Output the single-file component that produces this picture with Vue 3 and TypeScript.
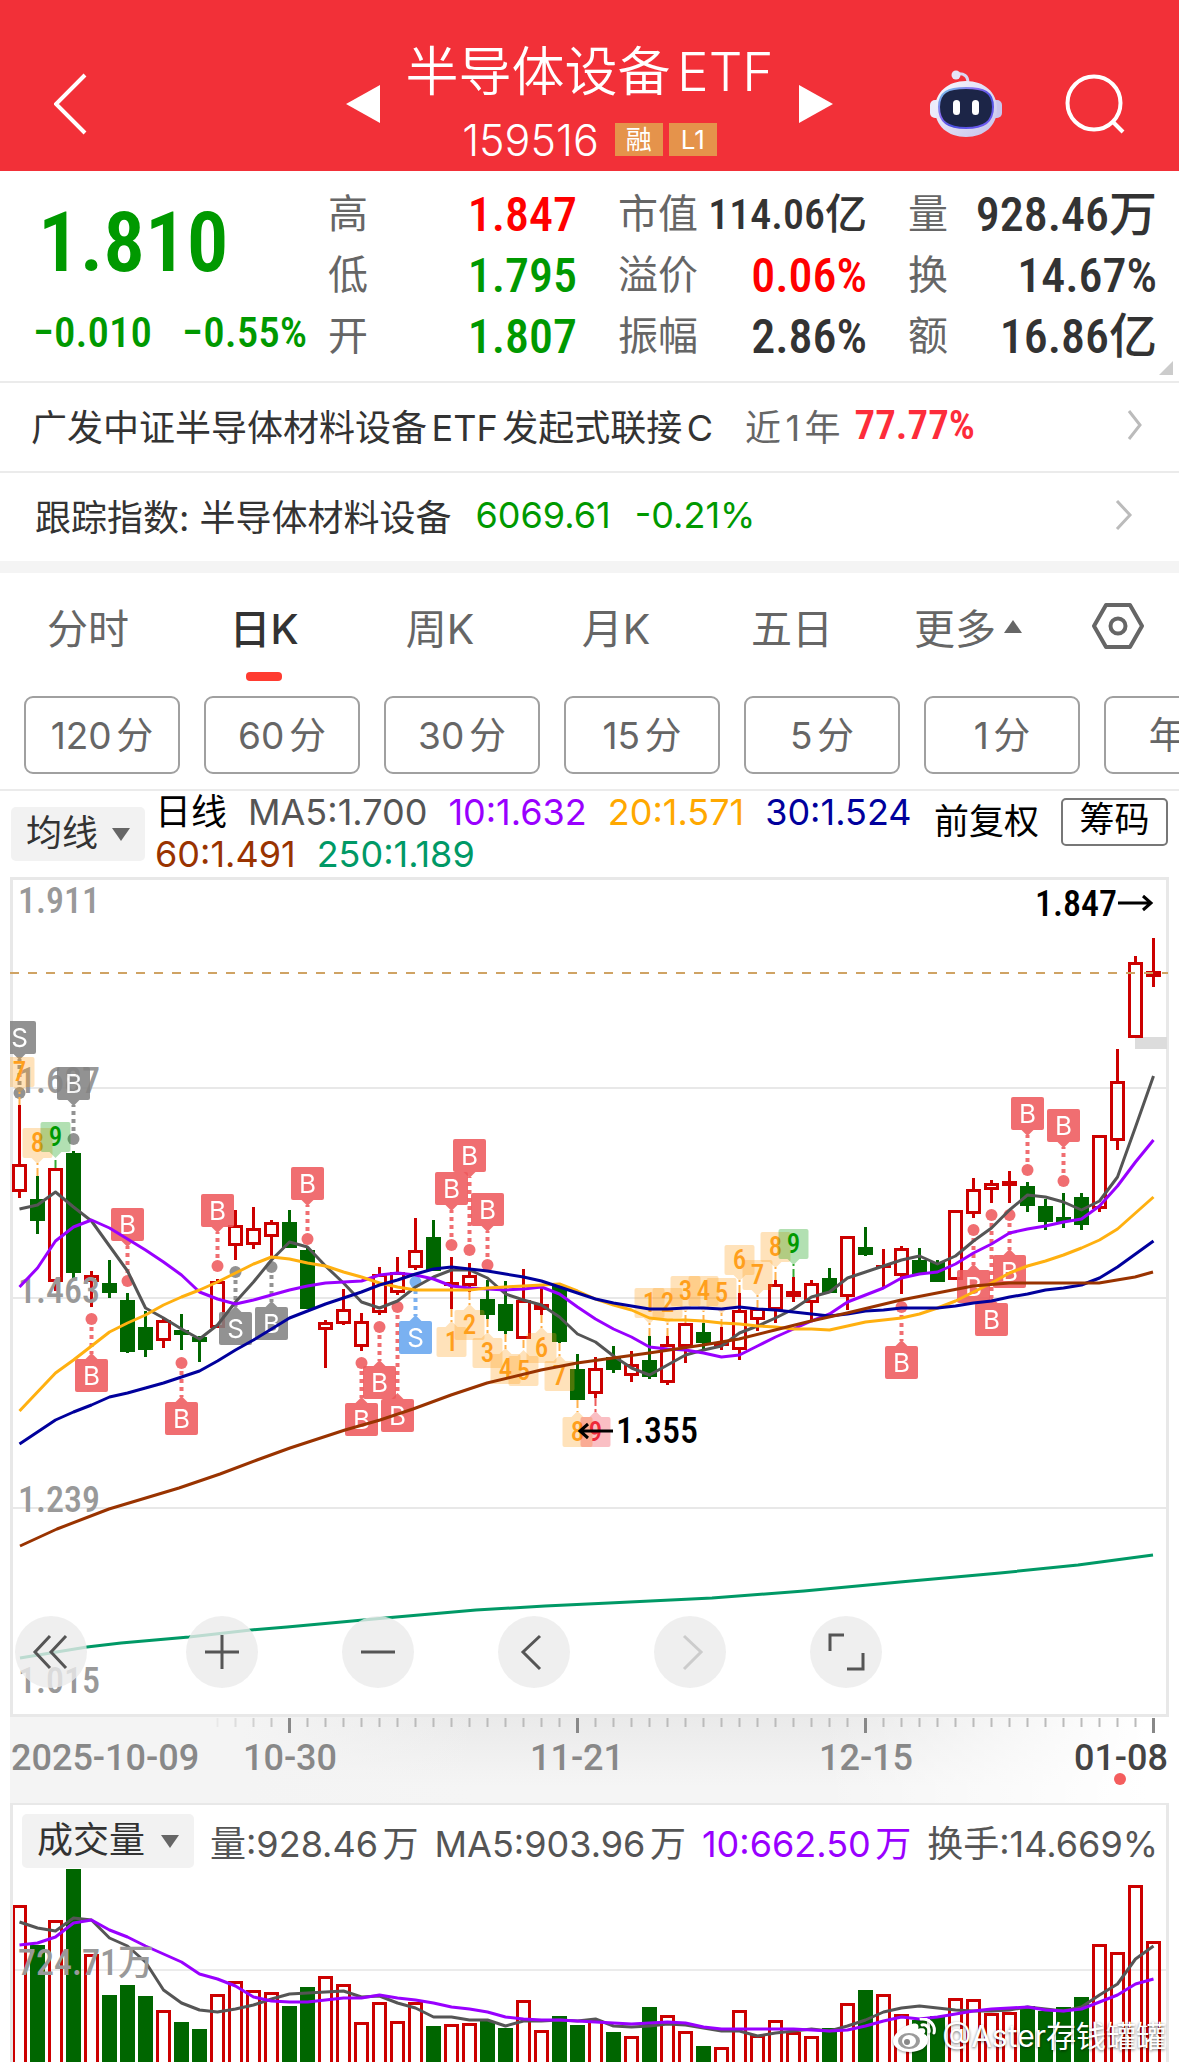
<script setup lang="ts">
import { ref } from 'vue'

type Side = 'up' | 'down'
interface Candle { x: number; up: boolean; high: number; top: number; bottom: number; low: number }
interface Signal { x: number; label: string; kind: string; box: number; dot: number; side: Side }
interface Count { x: number; label: string; kind: string; box: number; anchor: number; side: Side }

const STEP = 18
const FIRST = 19
const BODY = 15
const xAt = (i: number): number => FIRST + i * STEP + 0.5

/* r = rising, g = falling; high, body top, body bottom, low */
const rawCandles = `r 1105 1164 1192 1198|g 1176 1199 1221 1234|r 1168 1168 1282 1291|g 1151 1153 1273 1281|r 1271 1275 1282 1307|g 1260 1283 1293 1298|g 1293 1300 1352 1353|g 1311 1327 1350 1357|r 1318 1320 1341 1348|g 1314 1330 1335 1350|g 1336 1337 1342 1362|r 1279 1281 1328 1328|r 1210 1225 1246 1260|r 1207 1228 1245 1249|r 1220 1222 1237 1257|g 1210 1222 1248 1248|g 1248 1250 1309 1309|r 1320 1322 1330 1368|r 1289 1309 1324 1325|r 1313 1321 1347 1351|r 1267 1274 1313 1315|r 1257 1272 1293 1295|r 1218 1250 1268 1270|g 1220 1237 1271 1271|r 1257 1282 1286 1309|r 1263 1275 1286 1292|g 1280 1299 1315 1319|g 1281 1304 1331 1334|r 1269 1300 1339 1339|r 1286 1304 1310 1315|g 1285 1286 1342 1343|g 1354 1369 1400 1400|r 1357 1368 1394 1398|g 1346 1357 1370 1373|r 1351 1364 1376 1382|g 1336 1360 1377 1379|r 1336 1344 1383 1385|r 1323 1323 1347 1363|g 1323 1332 1343 1351|r 1327 1342 1346 1350|r 1293 1310 1350 1360|r 1308 1308 1320 1331|r 1280 1284 1310 1323|r 1277 1291 1297 1302|r 1280 1283 1303 1320|g 1268 1278 1293 1293|r 1236 1236 1297 1310|g 1227 1247 1255 1256|r 1249 1265 1268 1287|r 1246 1248 1276 1294|g 1248 1260 1274 1274|g 1260 1262 1282 1282|r 1210 1210 1280 1280|r 1178 1189 1214 1218|r 1180 1183 1190 1203|r 1171 1181 1186 1203|g 1182 1186 1206 1212|g 1199 1206 1222 1230|g 1193 1217 1222 1228|g 1193 1197 1225 1230|r 1135 1135 1209 1212|r 1049 1081 1141 1150|r 956 962 1038 1038|r 938 971 977 987`
const candles: Candle[] = rawCandles.split('|').map((row, i) => {
  const [k, ...v] = row.split(' ')
  const [high, top, bottom, low] = v.map(Number)
  return { x: xAt(i), up: k === 'r', high, top, bottom, low }
})

const line = (s: string): string => s.split(' ').map((y, i) => `${xAt(i)},${y}`).join(' ')

const averages = [
  { color: '#555555', points: line('1209 1205 1192 1207 1221 1246 1271 1308 1318 1329 1339 1325 1302 1282 1260 1242 1247 1266 1283 1302 1308 1301 1287 1277 1270 1270 1278 1294 1300 1305 1317 1334 1342 1356 1368 1375 1365 1355 1350 1346 1333 1326 1318 1309 1297 1292 1278 1272 1266 1260 1256 1264 1256 1241 1228 1210 1195 1197 1202 1210 1201 1177 1127 1076') },
  { color: '#9900ff', points: line('1287 1268 1241 1227 1220 1228 1239 1250 1262 1275 1292 1299 1304 1300 1295 1290 1286 1283 1282 1281 1275 1273 1275 1279 1286 1288 1289 1290 1289 1287 1294 1307 1319 1329 1337 1347 1349 1350 1353 1357 1355 1346 1337 1329 1321 1314 1302 1295 1288 1278 1274 1272 1264 1253 1244 1233 1229 1226 1222 1219 1206 1186 1162 1140') },
  { color: '#ffb010', points: line('1411 1392 1373 1360 1346 1332 1323 1315 1305 1297 1290 1282 1273 1264 1257 1259 1263 1266 1272 1277 1283 1287 1290 1290 1290 1290 1288 1287 1286 1285 1284 1291 1299 1305 1310 1318 1320 1320 1321 1323 1324 1326 1327 1329 1329 1330 1326 1322 1320 1318 1314 1308 1301 1292 1283 1273 1266 1261 1255 1248 1240 1229 1213 1197') },
  { color: '#00009c', points: line('1444 1432 1420 1412 1405 1397 1393 1388 1383 1377 1371 1361 1350 1340 1329 1318 1311 1304 1298 1292 1285 1280 1274 1269 1267 1269 1271 1274 1277 1281 1287 1293 1299 1303 1306 1309 1309 1308 1308 1309 1307 1309 1310 1312 1314 1316 1314 1311 1310 1308 1308 1308 1306 1303 1301 1297 1294 1290 1288 1285 1278 1267 1254 1241') },
  { color: '#993300', points: '20,1546 57,1529 109,1509 179,1488 220,1474 257,1460 290,1448 345,1430 380,1420 413,1409 451,1395 487,1383 541,1370 577,1363 613,1358 649,1353 703,1345 739,1339 775,1330 811,1321 847,1313 901,1300 937,1293 973,1286 1009,1283 1045,1283 1099,1283 1117,1280 1135,1277 1153,1272' },
  { color: '#009966', points: '20,1658 87,1647 121,1643 155,1640 189,1637 251,1630 287,1627 385,1618 476,1610 545,1606 609,1603 712,1598 804,1591 900,1582 1000,1573 1078,1565 1153,1555' },
]

const rawSignals = `0 S gray 1021 1093|3 B gray 1067 1139|4 B red 1359 1319|6 B red 1208 1281|9 B red 1402 1363|11 B red 1194 1266|12 S gray 1312 1272|14 B gray 1307 1267|16 B red 1167 1239|19 B red 1403 1363|20 B red 1366 1327|21 B red 1399 1307|22 S blue 1321 1282|24 B red 1172 1245|25 B red 1139 1250|26 B red 1193 1265|49 B red 1346 1307|53 B red 1270 1230|54 B red 1303 1215|55 B red 1255 1215|56 B red 1097 1170|58 B red 1109 1181`
const signals: Signal[] = rawSignals.split('|').map((row) => {
  const [i, label, kind, box, dot] = row.split(' ')
  return { x: xAt(+i), label, kind, box: +box, dot: +dot, side: +box < +dot ? 'up' : 'down' }
})

const rawCounts = `0 7 orange 1057 1105|1 8 orange 1128 1176|2 9 green 1122 1168|24 1 orange 1327 1309|25 2 orange 1310 1292|26 3 orange 1338 1319|27 4 orange 1354 1334|28 5 orange 1356 1340|29 6 orange 1333 1315|30 7 orange 1361 1343|31 8 orange 1417 1400|32 9 red 1417 1398|35 1 orange 1288 1336|36 2 orange 1288 1336|37 3 orange 1276 1323|38 4 orange 1276 1323|39 5 orange 1278 1327|40 6 orange 1245 1293|41 7 orange 1260 1308|42 8 orange 1232 1280|43 9 green 1229 1277`
const counts: Count[] = rawCounts.split('|').map((row) => {
  const [i, label, kind, box, anchor] = row.split(' ')
  return { x: xAt(+i), label, kind, box: +box, anchor: +anchor, side: +box < +anchor ? 'up' : 'down' }
})

/* triangle joining a tag to its leader line */
const tip = (x: number, box: number, size: number, side: Side): string =>
  side === 'up'
    ? `${x - 6},${box + size} ${x + 6},${box + size} ${x},${box + size + 6}`
    : `${x - 6},${box} ${x + 6},${box} ${x},${box - 6}`

const volumes = '1905 1945 1920 1869 1954 1995 1985 1996 2010 2022 2029 1994 1981 1990 1992 2006 1987 1976 1984 2022 2002 2021 2002 2026 2024 2023 2021 2028 2000 2030 2016 2025 2020 2032 2036 2007 2015 2031 2046 2047 2010 2035 2020 2032 2036 2028 2003 1990 1994 2014 2020 2016 1998 1999 2013 2012 2006 2011 2007 1997 1944 1952 1885 1941'.split(' ').map(Number)
const volumeAverages = [
  { color: '#555555', points: line('1922 1928 1931 1918 1920 1938 1946 1962 1990 2003 2010 2012 2009 2005 1999 1994 1993 1992 1991 1997 1996 2003 2008 2017 2017 2020 2020 2026 2021 2021 2020 2021 2019 2026 2027 2026 2024 2025 2028 2031 2031 2036 2033 2031 2029 2031 2026 2020 2012 2008 2006 2008 2010 2011 2011 2010 2007 2009 2011 2007 1995 1984 1959 1946') },
  { color: '#9900ff', points: line('1945 1943 1937 1923 1920 1930 1937 1946 1954 1962 1974 1979 1986 1997 2001 2002 2002 2000 1998 1998 1995 1998 2000 2003 2007 2009 2012 2017 2019 2020 2020 2021 2022 2023 2024 2023 2022 2023 2027 2029 2029 2029 2029 2029 2030 2031 2030 2026 2021 2017 2019 2017 2014 2011 2009 2008 2007 2010 2011 2009 2002 1995 1984 1979') },
]

const gridLines = [1088, 1298, 1508]
const yLabels = [
  { t: '1.911', y: 913 }, { t: '1.687', y: 1093 }, { t: '1.463', y: 1303 },
  { t: '1.239', y: 1512 }, { t: '1.015', y: 1693 },
]
const ticks = Array.from({ length: 53 }, (_, k) => k + 11)
const isMajor = (i: number): boolean => i % 16 === 15
const dates = [
  { t: '2025-10-09', x: 11, a: 'start', c: 'date' }, { t: '10-30', x: 290, a: 'middle', c: 'date' },
  { t: '11-21', x: 577, a: 'middle', c: 'date' }, { t: '12-15', x: 866, a: 'middle', c: 'date' },
  { t: '01-08', x: 1168, a: 'end', c: 'date date-now' },
]

const quote = [
  [{ k: '高', v: '1.847', c: 'rise' }, { k: '低', v: '1.795', c: 'fall' }, { k: '开', v: '1.807', c: 'fall' }],
  [{ k: '市值', v: '114.06亿', c: 'small' }, { k: '溢价', v: '0.06%', c: 'rise' }, { k: '振幅', v: '2.86%', c: '' }],
  [{ k: '量', v: '928.46万', c: '' }, { k: '换', v: '14.67%', c: '' }, { k: '额', v: '16.86亿', c: '' }],
]

const tabs = ['分时', '日K', '周K', '月K', '五日', '更多']
const activeTab = ref('日K')
const periods = ['120分', '60分', '30分', '15分', '5分', '1分', '年K']
const mainIndicator = ref('均线')
const subIndicator = ref('成交量')
const legend = [
  { t: '日线', c: '#000000' }, { t: 'MA5:1.700', c: '#555555' }, { t: '10:1.632', c: '#9900ff' },
  { t: '20:1.571', c: '#ffa800' }, { t: '30:1.524', c: '#00009c' },
  { t: '60:1.491', c: '#993300' }, { t: '250:1.189', c: '#009966' },
]
</script>

<template>
  <main class="page">
    <header class="topbar">
      <button class="icon-btn back" aria-label="返回">
        <svg width="34" height="62" viewBox="0 0 34 62"><path d="M31 2 2 31 31 60" fill="none" stroke="#fff" stroke-width="4" /></svg>
      </button>
      <div class="switcher">
        <button class="icon-btn" aria-label="上一个">
          <svg width="34" height="38" viewBox="0 0 34 38"><path d="M34 0V38L0 19Z" fill="#fff" /></svg>
        </button>
        <div class="name">
          <h1>半导体设备ETF</h1>
          <p class="code"><span>159516</span><em>融</em><em>L1</em></p>
        </div>
        <button class="icon-btn" aria-label="下一个">
          <svg width="34" height="38" viewBox="0 0 34 38"><path d="M0 0V38L34 19Z" fill="#fff" /></svg>
        </button>
      </div>
      <div class="actions">
        <button class="icon-btn" aria-label="助手">
          <svg width="72" height="68" viewBox="0 0 72 68">
            <defs>
              <linearGradient id="shell" x1="0" y1="0" x2="1" y2="1"><stop offset="0" stop-color="#fafaff" /><stop offset="1" stop-color="#c4c0ea" /></linearGradient>
              <linearGradient id="rim" x1="0" y1="0" x2="1" y2="1"><stop offset="0" stop-color="#6fd0e8" /><stop offset=".35" stop-color="#8a6cf0" /><stop offset=".6" stop-color="#4a50e0" /><stop offset="1" stop-color="#7a5cf5" /></linearGradient>
            </defs>
            <path d="M27 4c7-1 11 2 11 9" fill="none" stroke="#d9d6f2" stroke-width="3" />
            <circle cx="26" cy="5" r="4.500" fill="#e6e4f8" />
            <rect x="0" y="30" width="12" height="18" rx="5" fill="#ecebfa" />
            <rect x="60" y="30" width="12" height="18" rx="5" fill="#c9c5ee" />
            <path d="M36 11C54 11 67 22 67 39S54 67 36 67 5 56 5 39 18 11 36 11Z" fill="url(#shell)" />
            <path d="M36 18C54 18 63 22 63 37S54 58 36 58 9 52 9 37 18 18 36 18Z" fill="#1c2547" stroke="url(#rim)" stroke-width="2" />
            <rect x="23" y="30" width="7" height="15" rx="3.500" fill="#fff" />
            <rect x="42" y="30" width="7" height="15" rx="3.500" fill="#fff" />
          </svg>
        </button>
        <button class="icon-btn" aria-label="搜索">
          <svg width="60" height="60" viewBox="0 0 60 60"><circle cx="29" cy="29" r="26.500" fill="none" stroke="#fff" stroke-width="4" /><path d="M47 47 58 58" stroke="#fff" stroke-width="4" /></svg>
        </button>
      </div>
    </header>

    <section class="quote">
      <div class="last">
        <strong>1.810</strong>
        <p><span>−0.010</span><span>−0.55%</span></p>
      </div>
      <dl v-for="(col, c) in quote" :key="c">
        <div v-for="item in col" :key="item.k"><dt>{{ item.k }}</dt><dd :class="item.c">{{ item.v }}</dd></div>
      </dl>
      <i class="corner"></i>
    </section>

    <a class="link-row" href="#fund">
      <span class="dark">广发中证半导体材料设备ETF发起式联接C</span>
      <span class="year">近1年</span><b>77.77%</b>
      <svg width="15" height="30" viewBox="0 0 15 30"><path d="M2 1 13 15 2 29" fill="none" stroke="#bbb" stroke-width="3" /></svg>
    </a>
    <a class="link-row index-row" href="#index">
      <span class="dark">跟踪指数: 半导体材料设备</span>
      <span class="pt">6069.61</span><span class="pct">-0.21%</span>
      <svg width="18" height="30" viewBox="0 0 18 30"><path d="M2 1 15 15 2 29" fill="none" stroke="#bbb" stroke-width="3" /></svg>
    </a>

    <nav class="tabs">
      <button v-for="t in tabs" :key="t" :class="{ on: t === activeTab }" @click="activeTab = t">
        {{ t }}<svg v-if="t === '更多'" width="18" height="13" viewBox="0 0 18 13"><path d="M9 0 18 13H0Z" fill="#666" /></svg>
      </button>
      <button aria-label="设置">
        <svg width="52" height="46" viewBox="0 0 52 46"><path d="M14 2H38L50 23 38 44H14L2 23Z" fill="none" stroke="#666" stroke-width="4" stroke-linejoin="round" /><circle cx="26" cy="23" r="7.500" fill="none" stroke="#666" stroke-width="4" /></svg>
      </button>
    </nav>

    <div class="periods"><button v-for="p in periods" :key="p">{{ p }}</button></div>

    <section class="legend">
      <label class="picker main-picker"><select v-model="mainIndicator" aria-label="主图指标"><option>均线</option></select></label>
      <ul><li v-for="l in legend" :key="l.t" :style="{ color: l.c }">{{ l.t }}</li></ul>
      <div class="adjust"><button class="plain">前复权</button><button class="chips">筹码</button></div>
    </section>

    <section class="price-chart">
      <svg class="plot" viewBox="10 877 1159 840">
        <g fill="none" stroke="#e8e8e8">
          <rect x="11.500" y="878.500" width="1156" height="837" stroke-width="3" />
          <path v-for="y in gridLines" :key="y" :d="`M13 ${y}H1166`" stroke-width="2" />
        </g>
        <rect x="1135" y="1037" width="32" height="12" fill="#dcdcdc" />
        <g v-for="(c, i) in candles" :key="i" :class="c.up ? 'up' : 'dn'">
          <path :d="`M${c.x} ${c.high}V${c.top}M${c.x} ${c.bottom}V${c.low}`" stroke-width="3" />
          <rect v-if="c.up && c.bottom - c.top > 6" :x="c.x - 6" :y="c.top + 1.5" :width="BODY - 3" :height="Math.max(c.bottom - c.top - 3, 2)" stroke-width="3" fill="none" />
          <rect v-else class="solid" :x="c.x - 7.5" :y="c.top" :width="BODY" :height="c.bottom - c.top" />
        </g>
        <path d="M10 973H1168" stroke="#cfa364" stroke-width="2" stroke-dasharray="9 9" />
        <text v-for="l in yLabels" :key="l.t" class="scale" x="18" :y="l.y">{{ l.t }}</text>
        <g v-for="s in signals" :key="'s' + s.x" :class="['tag', s.kind]">
          <path :d="`M${s.x} ${s.dot}V${s.side === 'up' ? s.box + 38 : s.box - 5}`" stroke-width="4" stroke-dasharray="4 4" />
          <circle :cx="s.x" :cy="s.dot" r="6" />
          <rect :x="s.x - 16.5" :y="s.box" width="33" height="33" rx="2" />
          <polygon :points="tip(s.x, s.box, 33, s.side)" />
          <text :x="s.x" :y="s.box + 26" text-anchor="middle">{{ s.label }}</text>
        </g>
        <g v-for="n in counts" :key="'n' + n.x" :class="['count', n.kind]">
          <path :d="`M${n.x} ${n.anchor}V${n.side === 'up' ? n.box + 35 : n.box - 5}`" stroke-width="2" stroke-dasharray="8 3" />
          <rect :x="n.x - 15" :y="n.box" width="30" height="30" rx="2" />
          <polygon :points="tip(n.x, n.box, 30, n.side)" />
          <text :x="n.x" :y="n.box + 24" text-anchor="middle">{{ n.label }}</text>
        </g>
        <polyline v-for="a in averages" :key="a.color" :points="a.points" fill="none" :stroke="a.color" stroke-width="3" stroke-linejoin="round" />
        <g fill="none" stroke="#000" stroke-width="3">
          <path d="M613 1431H580M588 1424 580 1431 588 1438" />
          <path d="M1118 903H1151M1143 896 1151 903 1143 910" />
        </g>
        <text class="extreme" x="616" y="1443">1.355</text>
        <text class="extreme" x="1117" y="916" text-anchor="end">1.847</text>
      </svg>
      <div class="tools">
        <button aria-label="最早"><svg viewBox="0 0 72 72"><path d="M35 20 20 36 35 52M51 20 36 36 51 52" /></svg></button>
        <button aria-label="放大"><svg viewBox="0 0 72 72"><path d="M19 36H53M36 19V53" /></svg></button>
        <button aria-label="缩小"><svg viewBox="0 0 72 72"><path d="M19 36H53" /></svg></button>
        <button aria-label="向左"><svg viewBox="0 0 72 72"><path d="M42 20 25 36 42 53" /></svg></button>
        <button aria-label="向右" disabled><svg viewBox="0 0 72 72"><path d="M30 20 47 36 30 53" /></svg></button>
        <button aria-label="全屏"><svg viewBox="0 0 72 72"><path d="M20 35V19H34M37 53H53V37" /></svg></button>
      </div>
    </section>

    <section class="axis">
      <svg class="plot" viewBox="10 1717 1159 86">
        <path v-for="i in ticks" :key="i" :d="`M${xAt(i)} 1718V${isMajor(i) ? 1733 : 1727}`" :stroke="isMajor(i) ? '#888' : '#bbb'" :stroke-width="isMajor(i) ? 3 : 2" :opacity="Math.min(1, (i - 10) / 5)" />
        <text v-for="d in dates" :key="d.t" :class="d.c" :x="d.x" y="1770" :text-anchor="d.a">{{ d.t }}</text>
        <circle cx="1120" cy="1779" r="6" fill="#f45d5d" />
      </svg>
    </section>

    <section class="volume">
      <div class="volume-head">
        <label class="picker"><select v-model="subIndicator" aria-label="副图指标"><option>成交量</option></select></label>
        <span>量:928.46万</span><span>MA5:903.96万</span><span class="purple">10:662.50万</span><span>换手:14.669%</span>
      </div>
      <svg class="plot" viewBox="13 1868 1153 194">
        <path d="M13 1970H1166" stroke="#ebebeb" stroke-width="2" />
        <g v-for="(v, i) in volumes" :key="i" :class="candles[i].up ? 'up' : 'dn'">
          <rect v-if="candles[i].up" :x="xAt(i) - 6" :y="v + 1.5" :width="BODY - 3" height="220" stroke-width="3" fill="none" />
          <rect v-else class="solid" :x="xAt(i) - 7.5" :y="v" :width="BODY" height="220" />
        </g>
        <polyline v-for="a in volumeAverages" :key="a.color" :points="a.points" fill="none" :stroke="a.color" stroke-width="3" stroke-linejoin="round" />
        <text class="scale" x="18" y="1975">724.71万</text>
      </svg>
      <p class="author">
        <svg width="44" height="36" viewBox="0 0 44 36">
          <path d="M17 7c4-2 8-2 9 0 1 2 0 4 0 4s6-2 7 1c1 2-1 4-1 4s4 1 4 6c0 7-8 12-18 12S1 29 1 23C1 17 9 9 17 7Z" fill="#fff" />
          <ellipse cx="17" cy="23" rx="11" ry="8" fill="#9b9b9b" /><ellipse cx="17" cy="23" rx="7" ry="6" fill="#fff" />
          <circle cx="15" cy="24" r="3" fill="#888" />
          <path d="M30 7c4-1 8 3 7 7M29 1c8-1 15 6 13 14" fill="none" stroke="#fff" stroke-width="3" stroke-linecap="round" />
        </svg>
        @Aster存钱罐罐
      </p>
    </section>
  </main>
</template>

<style>
body { background: #fff; }
</style>

<style scoped>
.page {
  --num: "Roboto Condensed", "Liberation Sans Narrow", Roboto, "Noto Sans CJK SC", sans-serif;
  overflow: hidden;
  font-family: Inter, "Noto Sans CJK SC", sans-serif;
  color: #333;
  text-autospace: normal;
}
button { padding: 0; border: 0; background: none; font: inherit; color: inherit; cursor: pointer; }
svg { display: block; }
h1, p, dl, dd, ul { margin: 0; padding: 0; }
.plot { width: 100%; height: auto; }

.topbar {
  display: grid;
  grid-template-columns: 1fr auto 1fr;
  align-items: center;
  padding: 36px 54px 0;
  background: #f23038;
  color: #fff;
}
.back { justify-self: start; }
.switcher { display: flex; align-items: center; gap: 25px; }
.name { text-align: center; }
h1 { font-size: 53px; line-height: 72px; font-weight: 350; white-space: nowrap; }
.code { display: flex; justify-content: center; align-items: center; gap: 6px; height: 63px; font-size: 43px; font-weight: 300; }
.code span { margin-right: 10px; }
.code em { width: 48px; background: #e5934b; font-size: 26px; line-height: 33px; font-style: normal; font-weight: 400; }
.actions { display: flex; justify-content: flex-end; align-items: center; gap: 63px; }

.quote { position: relative; display: flex; gap: 41px; padding: 13px 22px 14px 33px; border-bottom: 2px solid #ebebeb; font-family: var(--num); font-weight: 500; text-autospace: no-autospace; }
.last { width: 254px; color: #009900; white-space: nowrap; }
.last strong { display: block; padding-left: 5px; font-size: 83px; line-height: 118px; font-weight: 600; }
.last p { display: flex; justify-content: space-between; width: 274px; font-size: 43px; line-height: 61px; }
dl { flex: 1; }
dl div { display: flex; justify-content: space-between; line-height: 61px; white-space: nowrap; }
dt { font-size: 40px; font-weight: 400; color: #666; }
dd { font-size: 48px; }
.rise { color: #ff0000; }
.fall { color: #009900; }
.small { font-size: 42px; }
.corner { position: absolute; right: 6px; bottom: 6px; border-left: 14px solid transparent; border-bottom: 14px solid #ccc; }

.link-row { box-sizing: border-box; display: flex; align-items: center; height: 90px; padding: 0 37px 4px 31px; border-bottom: 2px solid #ebebeb; font-size: 36px; color: #666; text-decoration: none; white-space: nowrap; }
.link-row svg { margin-left: auto; }
.link-row b { margin-left: 14px; font-family: var(--num); font-size: 41px; font-weight: 600; color: #fd2c3a; }
.dark { color: #333; }
.year { margin-left: 32px; }
.index-row { height: 100px; padding: 0 46px 4px 35px; border-bottom: 12px solid #f4f4f4; }
.pt { margin-left: 24px; color: #009900; }
.pct { margin-left: 24px; color: #009900; }

.tabs { display: grid; grid-template-columns: repeat(6, 1fr) 123px; height: 110px; font-size: 41px; color: #666; text-autospace: no-autospace; }
.tabs button { position: relative; display: flex; justify-content: center; align-items: center; gap: 8px; padding-bottom: 4px; white-space: nowrap; }
.tabs .on { font-weight: 500; color: #333; }
.tabs .on::after { content: ""; position: absolute; bottom: 2px; width: 36px; height: 9px; border-radius: 4px; background: #ff3b30; }

.periods { display: flex; gap: 24px; padding: 13px 0 15px 24px; border-bottom: 2px solid #ebebeb; overflow: hidden; }
.periods button { flex: 0 0 156px; height: 78px; box-sizing: border-box; padding-bottom: 5px; border: 2px solid #a0a0a0; border-radius: 9px; font-size: 37px; color: #666; }

.legend { display: flex; align-items: center; height: 86px; padding: 0 11px; font-size: 36px; }
.picker { position: relative; flex: none; }
.picker select { display: block; appearance: none; height: 54px; padding: 0 48px 2px 15px; border: 0; border-radius: 5px; background: #f2f2f2; font: inherit; font-size: 36px; color: #333; }
.picker::after { content: ""; position: absolute; right: 15px; top: 21px; border: 9px solid transparent; border-top: 13px solid #666; border-bottom: 0; pointer-events: none; }
.main-picker select { width: 134px; }
.legend ul { flex: 1; display: flex; flex-wrap: wrap; align-self: flex-start; column-gap: 21px; margin-left: 10px; list-style: none; }
.legend li { line-height: 42px; white-space: nowrap; }
.adjust { display: flex; align-items: center; gap: 22px; align-self: flex-start; height: 62px; color: #000; font-size: 35px; }
.adjust button { padding-bottom: 7px; white-space: nowrap; }
.chips { width: 107px; height: 48px; box-sizing: border-box; border: 2px solid #777; border-radius: 5px; line-height: 36px; }

.price-chart { position: relative; padding: 0 10px; }
.up { stroke: #cc0000; }
.dn { stroke: #006600; }
.up .solid { fill: #cc0000; stroke: none; }
.dn .solid { fill: #006600; stroke: none; }
.tag { opacity: .87; }
.tag path { fill: none; }
.tag text { font-size: 26px; stroke: none; fill: #fff; }
.tag.red { fill: #ee595c; }
.tag.red path { stroke: #ee595c; }
.tag.gray { fill: #838383; }
.tag.gray path { stroke: #838383; }
.tag.blue { fill: #67a6f0; }
.tag.blue path { stroke: #67a6f0; }
.count rect, .count polygon { opacity: .3; }
.count text { font-size: 27px; font-family: var(--num); font-weight: 500; }
.count.orange { fill: #ff9f1c; }
.count.orange path { stroke: #ffb04a; }
.count.green { fill: #009900; }
.count.green path { stroke: #33aa33; }
.count.red { fill: #ee2a3a; }
.count.red path { stroke: #ee5a5a; }
.scale { font-family: var(--num); font-size: 36px; font-weight: 500; fill: #999; text-autospace: no-autospace; }
.extreme { font-family: var(--num); font-size: 36px; font-weight: 500; fill: #000; }
.tools { position: absolute; left: 15px; right: 0; bottom: 29px; display: flex; gap: 84px; }
.tools button { width: 72px; height: 72px; border-radius: 50%; background: rgba(235, 235, 235, .8); }
.tools button:first-child { margin-right: 15px; }
.tools path { fill: none; stroke: #555; stroke-width: 3; }
.tools button:disabled path { stroke: #ccc; }

.axis { margin: 0 10px; background: linear-gradient(90deg, #f4f4f4 0, #f4f4f4 20%, transparent 40%, transparent 70%, #fff 98%), linear-gradient(#eaeaea, #f5f5f5 80%); }
.date { font-family: Roboto, sans-serif; font-size: 36px; font-weight: 500; fill: #888; }
.date-now { fill: #444; }

.volume { position: relative; margin: 0 10px; border: 3px solid #e8e8e8; border-top-width: 2px; border-bottom: 0; }
.volume-head { box-sizing: border-box; display: flex; align-items: center; height: 63px; padding: 9px 0 0 9px; font-size: 36px; color: #555; white-space: nowrap; }
.volume-head span { margin-left: 16px; }
.volume-head .purple { color: #9900ff; }
.author { position: absolute; right: 0; bottom: 6px; display: flex; align-items: center; gap: 6px; font-size: 30px; line-height: 40px; color: #fff; text-shadow: 0 1px 3px rgba(0, 0, 0, .6); text-autospace: no-autospace; white-space: nowrap; }
.author svg { filter: drop-shadow(0 1px 1px rgba(0, 0, 0, .4)); }
</style>
